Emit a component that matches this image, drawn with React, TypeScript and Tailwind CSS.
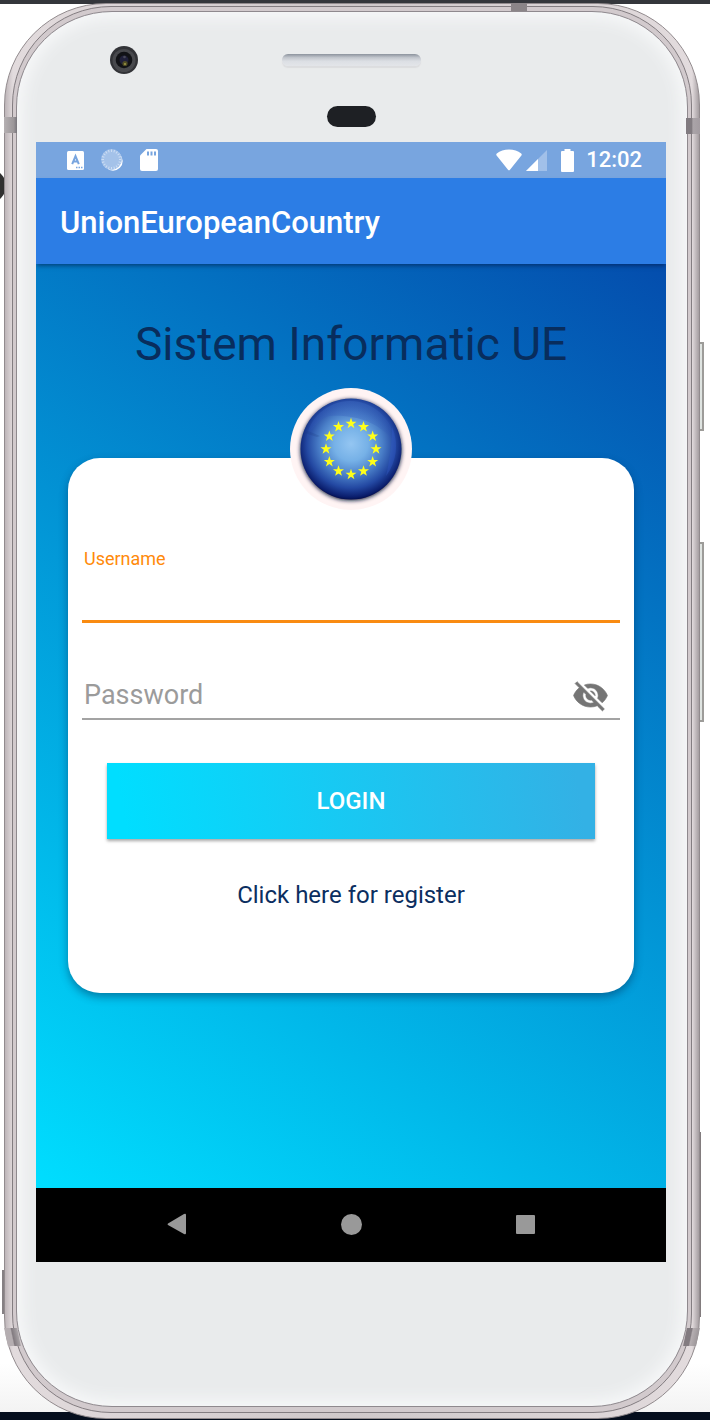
import { useState } from "react";

const STARS = Array.from({ length: 12 }, (_, i) => {
  const a = (i * Math.PI) / 6;
  return { x: 61 + 25 * Math.sin(a), y: 61 - 25.5 * Math.cos(a) };
});

const TICKS = Array.from({ length: 20 }, (_, i) => i * 18);

function starPoints(cx: number, cy: number) {
  return Array.from({ length: 10 }, (_, i) => {
    const r = i % 2 === 0 ? 5.8 : 2.3;
    const a = (i * Math.PI) / 5;
    return `${cx + r * Math.sin(a)},${cy - r * Math.cos(a)}`;
  }).join(" ");
}

function Emblem() {
  return (
    <svg viewBox="0 0 122 122" className="relative h-[122px] w-[122px]" role="img" aria-label="European Union">
      <defs>
        <radialGradient id="ball" cx="0.5" cy="0.45" r="0.56">
          <stop offset="0" stopColor="#94c6f2" />
          <stop offset="0.3" stopColor="#76b1e7" />
          <stop offset="0.56" stopColor="#4a7fc8" />
          <stop offset="0.78" stopColor="#2348a2" />
          <stop offset="0.94" stopColor="#0a1d6c" />
          <stop offset="1" stopColor="#020b42" />
        </radialGradient>
        <linearGradient id="shine" x1="0" y1="0" x2="0" y2="1">
          <stop offset="0" stopColor="#3a66c0" stopOpacity="0.5" />
          <stop offset="1" stopColor="#2c52b4" stopOpacity="0.08" />
        </linearGradient>
        <filter id="soft" x="-20%" y="-20%" width="140%" height="140%">
          <feGaussianBlur stdDeviation="2" />
        </filter>
      </defs>
      <circle cx="61" cy="61" r="61" fill="#fff4f4" />
      <circle cx="61" cy="62" r="50.5" fill="#101634" filter="url(#soft)" />
      <circle cx="61" cy="61" r="50.5" fill="url(#ball)" />
      <path d="M16 54C18 30 38 13 60 13s43 17 46 43C90 34 65 26 39 28 27 32 20 42 16 54Z" fill="url(#shine)" />
      <path d="M18 43l12 5-3 1-12-4z" fill="#17357f" opacity="0.2" />
      <path d="M102 39c7 15 5 35-6 49 4-17 6-34 6-49Z" fill="#315bc6" opacity="0.4" />
      {STARS.map((s, i) => (
        <polygon key={i} points={starPoints(s.x, s.y)} fill="#ffff19" />
      ))}
    </svg>
  );
}

function StatusBar() {
  return (
    <div className="flex h-9 items-center justify-between bg-[#78a5df] pr-6 pl-[31px] text-white">
      <div className="flex items-center gap-4">
        <svg width="17" height="19" viewBox="0 0 17 19" aria-hidden="true">
          <rect width="17" height="19" rx="1.5" fill="#fff" />
          <path d="M5.2 13.2 8.5 5.2l3.3 8M6.3 10.6h4.4" fill="none" stroke="#78a5df" strokeWidth="2" />
          <path d="M9 16.5h1.5M11.5 16.5H13M14 16.5h1.5" stroke="#78a5df" strokeWidth="1.3" />
        </svg>
        <svg width="24" height="24" viewBox="0 0 24 24" aria-hidden="true">
          <circle cx="13" cy="13" r="9.7" fill="#fff" />
          <circle cx="11.5" cy="11.5" r="10.400" fill="#a4c2e9" />
          {TICKS.map((t) => (
            <path key={t} d="M11.5 1.5v2.500" stroke="#cddef4" strokeWidth="1" transform={`rotate(${t} 11.5 11.5)`} />
          ))}
        </svg>
        <svg width="18" height="22" viewBox="0 0 18 22" aria-hidden="true">
          <path d="M6.5 0H16a2 2 0 0 1 2 2v18a2 2 0 0 1-2 2H2a2 2 0 0 1-2-2V6.5Z" fill="#fff" />
          <path d="M8 2.5v4M11.5 2.5v4M15 2.5v4" stroke="#78a5df" strokeWidth="2" />
        </svg>
      </div>
      <div className="flex items-center">
        <svg width="26" height="22" viewBox="0 0 26 22" aria-hidden="true">
          <path d="M14 20.800q-1 1-2 0L.4 6.200Q0 5.200.8 4.600C4 2 8.200.5 13 .5s9 1.500 12.200 4.100q.8.600.4 1.600Z" fill="#fff" />
        </svg>
        <svg width="22" height="22" viewBox="0 0 22 22" className="ml-1" aria-hidden="true">
          <path d="M21 1v21H0Z" fill="#a1c0e9" />
          <path d="M12 10v12H0Z" fill="#fff" />
        </svg>
        <svg width="13" height="23" viewBox="0 0 13 23" className="ml-[13px]" aria-hidden="true">
          <path d="M3.500 2V0h6v2H12a1 1 0 0 1 1 1v19a1 1 0 0 1-1 1H1a1 1 0 0 1-1-1V3a1 1 0 0 1 1-1Z" fill="#fff" />
        </svg>
        <time className="ml-3 text-[22px] leading-6 font-medium">12:02</time>
      </div>
    </div>
  );
}

function LoginForm() {
  const [visible, setVisible] = useState(false);
  const [password, setPassword] = useState("");
  return (
    <form
      onSubmit={(e) => e.preventDefault()}
      className="-mt-[52px] flex w-full flex-col rounded-[32px] bg-white px-[14px] pt-[89px] pb-[82px] shadow-[0_4px_8px_rgba(0,40,80,0.45)]"
    >
      <label htmlFor="username" className="px-[2px] text-[18px] leading-6 text-[#ff8a0a]">
        Username
      </label>
      <input
        id="username"
        type="text"
        className="h-[52px] w-full border-b-3 border-[#f98b11] px-[2px] text-[27px] text-black outline-none"
      />
      <div className="relative mt-[49px] flex h-[48px] items-center border-b-2 border-[#a3a3a3] pr-[11px] pl-[2px]">
        {password === "" && (
          <label htmlFor="password" className="absolute text-[27px] leading-8 text-[#9b9b9b]">
            Password
          </label>
        )}
        <input
          id="password"
          type={visible ? "text" : "password"}
          value={password}
          onChange={(e) => setPassword(e.target.value)}
          className="h-8 min-w-0 flex-1 text-[27px] leading-8 text-black outline-none"
        />
        <button type="button" aria-label="Show password" onClick={() => setVisible(!visible)}>
          <svg width="37" height="37" viewBox="0 0 24 24" fill="#757575" aria-hidden="true">
            <path
              stroke="#757575"
              strokeWidth="0.4"
              d="M12 7c2.760 0 5 2.240 5 5 0 .65-.13 1.260-.36 1.830l2.920 2.920c1.510-1.260 2.700-2.890 3.430-4.750-1.730-4.390-6-7.500-11-7.500-1.400 0-2.740.25-3.980.7l2.160 2.160C10.740 7.130 11.350 7 12 7zM2 4.270l2.280 2.280.46.46C3.080 8.300 1.780 10.020 1 12c1.730 4.390 6 7.500 11 7.500 1.550 0 3.030-.3 4.380-.84l.42.42L19.730 22 21 20.730 3.270 3 2 4.270zM7.530 9.800l1.550 1.550c-.05.21-.08.43-.08.65 0 1.660 1.340 3 3 3 .22 0 .44-.03.65-.08l1.550 1.550c-.67.33-1.410.53-2.200.53-2.760 0-5-2.240-5-5 0-.79.2-1.530.53-2.200zm4.310-.78 3.150 3.150.02-.16c0-1.660-1.340-3-3-3l-.17.01z"
            />
          </svg>
        </button>
      </div>
      <button
        type="submit"
        className="mx-[25px] mt-[43px] h-[76px] bg-[linear-gradient(81deg,#00deff_4%,#33b1e5_96%)] text-[24px] leading-8 font-medium text-white shadow-[0_2px_3px_rgba(0,0,0,0.35)]"
      >
        LOGIN
      </button>
      <a href="#register" className="mt-10 self-center text-[24px] leading-8 text-[#0b2e60]">
        Click here for register
      </a>
    </form>
  );
}

function NavBar() {
  return (
    <nav className="grid h-[74px] grid-cols-3 bg-black px-[54px] pb-[2px]">
      <button type="button" aria-label="Back" className="flex items-center justify-center">
        <svg width="20" height="22" viewBox="0 0 20 22" aria-hidden="true">
          <path d="M1 10.500Q0 11 1 12L17 21q2 1 2-1V2q0-2-2-1Z" fill="#999" />
        </svg>
      </button>
      <button type="button" aria-label="Home" className="flex items-center justify-center">
        <span className="size-[21px] rounded-full bg-[#999]" />
      </button>
      <button type="button" aria-label="Recent apps" className="flex items-center justify-center">
        <span className="size-[19px] rounded-[1px] bg-[#999]" />
      </button>
    </nav>
  );
}

function Earpiece() {
  return (
    <div className="grid h-[130px] grid-cols-[1fr_auto_1fr]">
      <div className="pt-[34px] pl-[74px]">
        <svg width="28" height="28" viewBox="0 0 28 28" aria-hidden="true">
          <circle cx="14" cy="14" r="14" fill="#323337" />
          <circle cx="14" cy="14.500" r="11.500" fill="#48494d" />
          <circle cx="14" cy="14" r="8.300" fill="#111216" />
          <circle cx="14" cy="14" r="4.500" fill="#20203a" />
          <circle cx="15" cy="17.500" r="2.600" fill="#4f4c24" />
          <circle cx="15" cy="18" r="1" fill="#a09a48" />
          <circle cx="14.500" cy="11" r="1.300" fill="#484858" />
        </svg>
      </div>
      <div className="flex flex-col items-center pt-[42px]">
        <div className="h-3 w-[139px] rounded-full bg-[linear-gradient(#8c939d,#c2c6cd_30%,#dcdfe4_60%,#e3e5e9)] shadow-[0_2px_1px_#dcdddf]" />
        <div className="mt-10 h-[21px] w-[49px] rounded-full bg-[#1e2024]" />
      </div>
    </div>
  );
}

function CaseDetails() {
  return (
    <div aria-hidden="true">
      <div className="absolute top-[342px] -right-1 h-[89px] w-1 border-y-2 border-r-2 border-[#9d9c99] bg-[#dfe4e1]" />
      <div className="absolute top-[542px] -right-1 h-[180px] w-1 border-y-2 border-r-2 border-[#9d9c99] bg-[#dfe4e1]" />
      <div className="absolute top-[1132px] -right-px h-[185px] w-px bg-[#827c7e]" />
      <div className="absolute top-[1270px] -left-[2px] h-11 w-[2px] bg-[#858083]" />
      <div className="absolute top-[117px] left-0 h-4 w-[13px] bg-[linear-gradient(90deg,#b5b0b2,#9b9699_75%,#77747b)]" />
      <div className="absolute top-[118px] right-0 h-4 w-[14px] bg-[linear-gradient(90deg,#817b80_40%,#aaa4a8_50%,#a39ca1)]" />
      <div className="absolute top-[1328px] left-[2px] h-[18px] w-[13px] skew-x-12 bg-[linear-gradient(90deg,#b5aeb1_45%,#827b80_55%,#aaa5a8)]" />
      <div className="absolute top-[1328px] right-[2px] h-[18px] w-[13px] -skew-x-12 bg-[linear-gradient(90deg,#827b80_40%,#b5aeb1_50%,#9c9699)]" />
      <div className="absolute top-[3px] right-[173px] h-2 w-4 bg-[#8b8588]" />
    </div>
  );
}

export default function App() {
  return (
    <div className="relative min-h-screen overflow-hidden bg-[linear-gradient(#fff_96%,#f1f1f1)] pr-[10px] pl-1 font-[Roboto,sans-serif]">
      <div className="absolute inset-x-0 top-0 h-1 bg-[#34363b]" />
      <div className="absolute inset-x-0 bottom-0 h-2 bg-[#050e1d]" />
      <div className="absolute top-[169px] -left-7 size-[34px] rounded-full bg-[#303030]" />
      <div className="relative pt-[3px]">
        <div className="rounded-[102px] border border-[#928b8e] bg-[linear-gradient(90deg,#bdb5b8,#e2dbdd_8px,#cfc8ca_50%,#e2dbdd_calc(100%_-_7px),#a59ea1)] px-[7px] pt-[2px] pb-[5px]">
          <div className="rounded-[99px] border border-[#837d81] bg-[#d2cacd] px-[3px] pt-1 pb-[5px]">
            <div className="rounded-[96px] border border-[#8f898e] bg-[#e9ebec] pr-[21px] pb-[144px] pl-[19px] shadow-[inset_0_0_16px_6px_#f7f8f9]">
              <Earpiece />
              <main className="overflow-hidden bg-black">
                <StatusBar />
                <header className="relative flex h-[86px] items-center bg-[#2c7de5] px-6 pt-[3px] shadow-[0_3px_4px_-1px_rgba(0,20,60,0.5)]">
                  <h1 className="text-[31px] leading-10 font-medium text-white">UnionEuropeanCountry</h1>
                </header>
                <section className="flex flex-col items-center bg-[linear-gradient(34deg,#00deff,#044dad)] px-8 pt-[52px] pb-[195px]">
                  <h2 className="mb-4 text-[46px] leading-[56px] text-[#082d5d]">Sistem Informatic UE</h2>
                  <div className="relative z-10">
                    <Emblem />
                  </div>
                  <LoginForm />
                </section>
                <NavBar />
              </main>
            </div>
          </div>
        </div>
        <CaseDetails />
      </div>
    </div>
  );
}
